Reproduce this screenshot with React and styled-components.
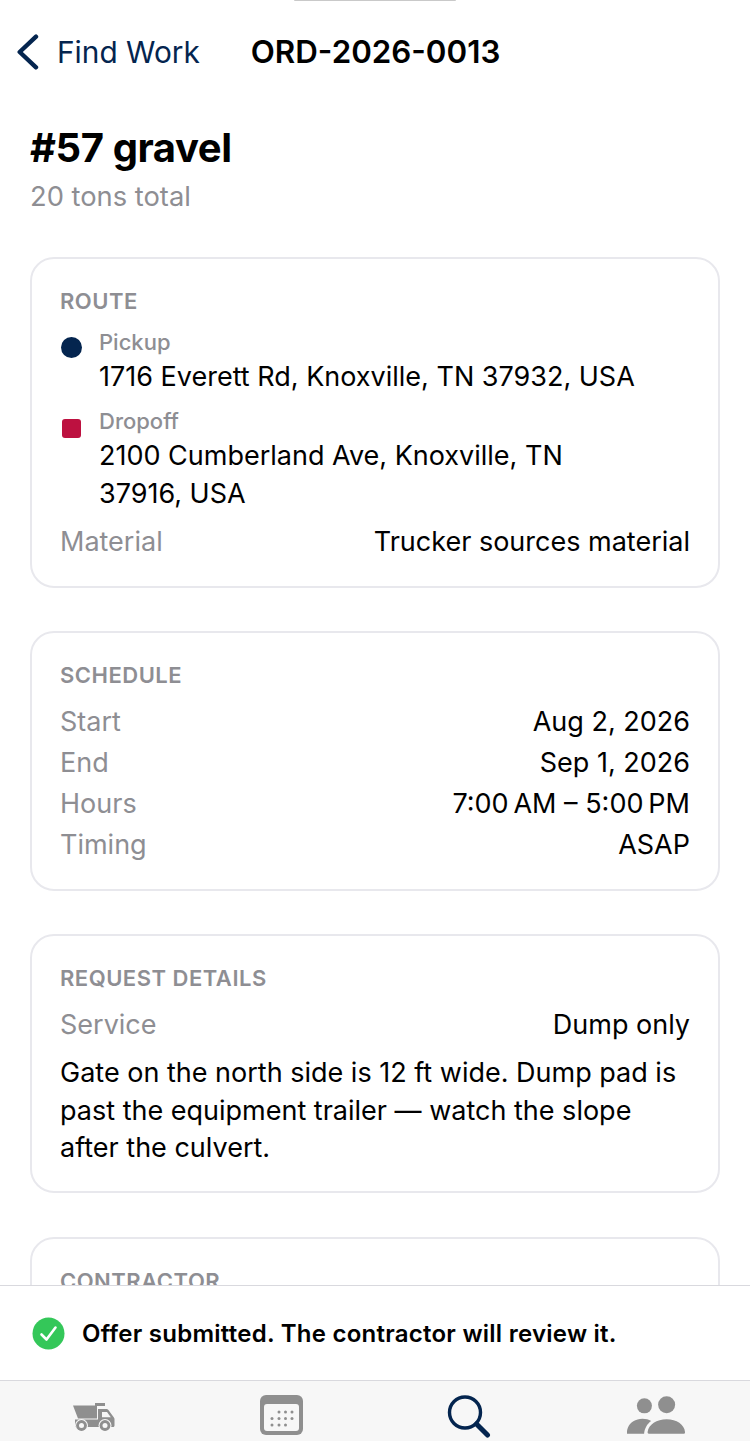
import React from "react";
import styled, { createGlobalStyle } from "styled-components";

const navy = "#04254f";
const muted = "#8e8e93";
const tabGrey = "#8f8f8f";
const tabBg = "#f7f7f7";

const Global = createGlobalStyle`
  html, body { margin: 0; padding: 0; background: #fff; }
  body { font-family: Inter, "Liberation Sans", sans-serif; -webkit-font-smoothing: antialiased; }
  * { box-sizing: border-box; }
`;

const Screen = styled.div`
  width: 750px;
  height: 1441px;
  display: flex;
  flex-direction: column;
  overflow: hidden;
  background: #fff;
`;

const Notch = styled.div`
  flex: none;
  width: 162px;
  height: 1px;
  margin: 0 auto;
  background: #c9c9c9;
  border-radius: 0 0 4px 4px;
`;

const Header = styled.header`
  flex: none;
  height: 101px;
  display: flex;
  align-items: center;
  padding: 0 0 0 17px;
`;

const BackLink = styled.div`
  display: flex;
  align-items: center;
  gap: 18px;
  color: ${navy};
  font-size: 29.8px;
  line-height: 36px;
`;

const OrderId = styled.div`
  margin-left: 51px;
  font-size: 31.3px;
  font-weight: 600;
  line-height: 36px;
  color: #000;
`;

const Scroll = styled.main`
  flex: 1;
  min-height: 0;
  overflow: hidden;
  padding: 0 30px;
`;

const Title = styled.h1`
  margin: 21px 0 0;
  font-size: 40px;
  line-height: 50px;
  font-weight: 700;
  letter-spacing: -0.4px;
  color: #000;
`;

const Subtitle = styled.div`
  margin-top: 6px;
  font-size: 27.3px;
  line-height: 36px;
  color: ${muted};
`;

const Card = styled.section`
  margin-top: ${(p) => p.$top || 43}px;
  padding: 28px 28px 24px;
  border: 2px solid #e8e8ed;
  border-radius: 24px;
  background: #fff;
`;

const CardLabel = styled.div`
  font-size: 22px;
  line-height: 28px;
  font-weight: 600;
  letter-spacing: 0.5px;
  color: ${muted};
`;

const Stop = styled.div`
  display: flex;
  margin-top: ${(p) => p.$top}px;
`;

const Marker = styled.div`
  flex: none;
  width: 39px;
  padding-top: 9px;
`;

const Dot = styled.div`
  width: 21px;
  height: 21px;
  margin-left: 1px;
  background: ${navy};
  border-radius: 50%;
`;

const Square = styled.div`
  width: 19px;
  height: 19px;
  margin: 3px 0 0 2px;
  background: #bd1140;
  border-radius: 3px;
`;

const StopBody = styled.div`
  min-width: 0;
`;

const StopKind = styled.div`
  font-size: 22px;
  line-height: 28px;
  font-weight: 500;
  color: ${muted};
`;

const Address = styled.div`
  margin-top: 2px;
  font-size: 27px;
  line-height: 38px;
  color: #000;
`;

const Row = styled.div`
  display: flex;
  justify-content: space-between;
  margin-top: ${(p) => p.$top || 0}px;
  font-size: 27px;
  line-height: 41px;
  color: #000;
`;

const RowKey = styled.span`
  color: ${muted};
`;

const Note = styled.p`
  margin: 9px 0 0;
  font-size: 27px;
  line-height: 37.5px;
  color: #000;
`;

const Toast = styled.div`
  flex: none;
  height: 96px;
  display: flex;
  align-items: center;
  gap: 17px;
  padding: 0 32px;
  background: #fff;
  border-top: 1px solid #d9d9de;
  border-bottom: 1px solid #d9d9de;
`;

const ToastText = styled.span`
  font-size: 24px;
  font-weight: 600;
  letter-spacing: 0.25px;
  color: #000;
`;

const TabBar = styled.nav`
  flex: none;
  height: 60px;
  display: grid;
  grid-template-columns: repeat(4, 1fr);
  background: ${tabBg};
  padding-top: 14px;
`;

const Tab = styled.div`
  display: flex;
  justify-content: center;
  padding-top: ${(p) => p.$drop || 0}px;
`;

const wheels = [8.5, 32];

const TruckIcon = () => (
  <svg width="42" height="29" viewBox="0 0 42 29" fill={tabGrey}>
    <path d="M22 0h10v3H24v12.500H5L0 2.500h22z" />
    <path d="M2 16.500h23V6h8.500c.8 0 1.400.3 1.900 1l5.500 7.500c.4.600.6 1.100.6 1.800v6.200c0 .8-.5 1.500-1.500 1.500H2z" />
    <path d="M29 9h5l3.800 5.300H29z" fill={tabBg} />
    {wheels.map((cx) => (
      <g key={cx}>
        <circle cx={cx} cy="22.500" r="6.500" fill={tabBg} />
        <circle cx={cx} cy="22.500" r="5.400" />
        <circle cx={cx} cy="22.500" r="2.500" fill={tabBg} />
      </g>
    ))}
  </svg>
);

const dots = [
  [19, 17], [25.5, 17], [32, 17],
  [12, 23.5], [19, 23.5], [25.5, 23.5], [32, 23.5],
  [12, 30], [19, 30], [25.5, 30],
];

const CalendarIcon = () => (
  <svg width="43" height="40" viewBox="0 0 43 40">
    <rect width="43" height="40" rx="6" fill={tabGrey} />
    <rect x="4" y="9" width="35" height="27" rx="3" fill={tabBg} />
    {dots.map(([x, y]) => (
      <circle key={`${x}-${y}`} cx={x} cy={y} r="1.5" fill={tabGrey} />
    ))}
  </svg>
);

const SearchIcon = () => (
  <svg width="44" height="44" viewBox="0 0 44 44" fill="none" stroke={navy} strokeLinecap="round">
    <circle cx="18" cy="17.5" r="15.5" strokeWidth="3.4" />
    <path d="M29.5 29l11 11" strokeWidth="5" />
  </svg>
);

const PeopleIcon = () => (
  <svg width="58" height="38" viewBox="0 0 60 39" fill={tabGrey}>
    <circle cx="18" cy="10" r="7.8" />
    <circle cx="41" cy="9" r="8.8" />
    <path d="M0 39c-.3-2 0-4 1-6.500 2-5 8-9 15-9 3.500 0 6.500.8 9 2.200-4 2.800-7 7.800-7.300 13.300z" />
    <path d="M22.500 39c-.8 0-1.300-.7-1.200-1.800 1-7.800 9.500-13.200 19.700-13.200s18.500 5.500 19 13.200c.1 1.100-.4 1.800-1.300 1.800z" />
  </svg>
);

export default function App() {
  return (
    <Screen>
      <Global />
      <Notch />
      <Header>
        <BackLink>
          <svg width="22" height="38" viewBox="0 0 22 38" fill="none" stroke={navy} strokeWidth="4.4" strokeLinecap="round" strokeLinejoin="round">
            <path d="M19 3.700L2.700 19 19 34.300" />
          </svg>
          Find Work
        </BackLink>
        <OrderId>ORD-2026-0013</OrderId>
      </Header>
      <Scroll>
        <Title>#57 gravel</Title>
        <Subtitle>20 tons total</Subtitle>

        <Card $top={42}>
          <CardLabel>ROUTE</CardLabel>
          <Stop $top={13}>
            <Marker><Dot /></Marker>
            <StopBody>
              <StopKind>Pickup</StopKind>
              <Address>1716 Everett Rd, Knoxville, TN 37932, USA</Address>
            </StopBody>
          </Stop>
          <Stop $top={11}>
            <Marker><Square /></Marker>
            <StopBody>
              <StopKind>Dropoff</StopKind>
              <Address>2100 Cumberland Ave, Knoxville, TN<br />37916, USA</Address>
            </StopBody>
          </Stop>
          <Row $top={8}>
            <RowKey>Material</RowKey>
            <span>Trucker sources material</span>
          </Row>
        </Card>

        <Card>
          <CardLabel>SCHEDULE</CardLabel>
          <Row $top={12}><RowKey>Start</RowKey><span>Aug 2, 2026</span></Row>
          <Row><RowKey>End</RowKey><span>Sep 1, 2026</span></Row>
          <Row><RowKey>Hours</RowKey><span>{"7:00\u202FAM – 5:00\u202FPM"}</span></Row>
          <Row><RowKey>Timing</RowKey><span>ASAP</span></Row>
        </Card>

        <Card>
          <CardLabel>REQUEST DETAILS</CardLabel>
          <Row $top={12}><RowKey>Service</RowKey><span>Dump only</span></Row>
          <Note>
            Gate on the north side is 12 ft wide. Dump pad is past the equipment trailer — watch the slope after the culvert.
          </Note>
        </Card>

        <Card $top={44}>
          <CardLabel>CONTRACTOR</CardLabel>
        </Card>
      </Scroll>
      <Toast>
        <svg width="33" height="33" viewBox="0 0 33 33">
          <circle cx="16.5" cy="16.5" r="16" fill="#34c759" />
          <path d="M9.500 17.500l5 5 9-12" fill="none" stroke="#fff" strokeWidth="2.600" strokeLinecap="round" strokeLinejoin="round" />
        </svg>
        <ToastText>Offer submitted. The contractor will review it.</ToastText>
      </Toast>
      <TabBar>
        <Tab $drop={8}><TruckIcon /></Tab>
        <Tab><CalendarIcon /></Tab>
        <Tab><SearchIcon /></Tab>
        <Tab $drop={1}><PeopleIcon /></Tab>
      </TabBar>
    </Screen>
  );
}
